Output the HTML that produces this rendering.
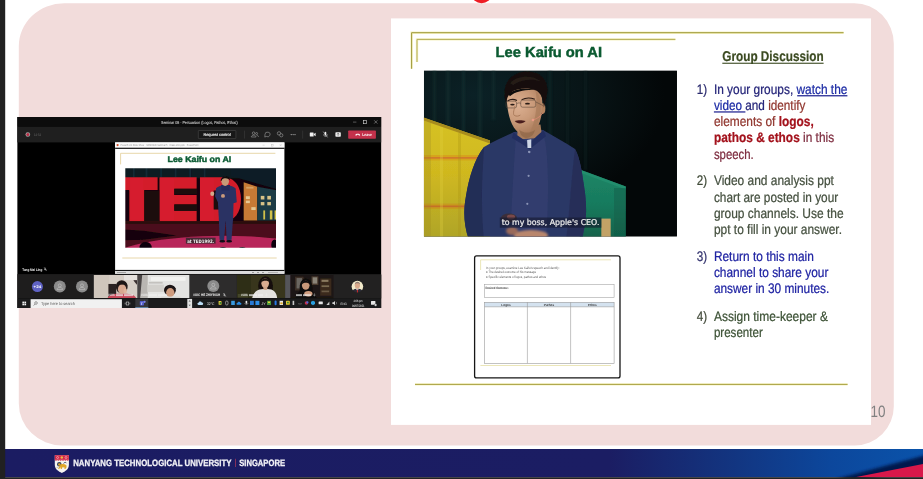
<!DOCTYPE html>
<html lang="en">
<head>
<meta charset="utf-8">
<title>Group Discussion - Lee Kaifu on AI</title>
<style>
html,body{margin:0;padding:0;background:#fff;overflow:hidden;}
body{width:923px;height:479px;position:relative;font-family:"Liberation Sans",sans-serif;}
svg{position:absolute;left:0;top:0;display:block;opacity:0.999;}
text{font-family:"Liberation Sans",sans-serif;text-rendering:geometricPrecision;}
</style>
</head>
<body>
<svg width="923" height="479" viewBox="0 0 923 479">
<defs>
  <linearGradient id="footg" x1="0" x2="1" y1="0" y2="0">
    <stop offset="0" stop-color="#1b1c62"/>
    <stop offset="0.66" stop-color="#1b1d63"/>
    <stop offset="0.72" stop-color="#172870"/>
    <stop offset="0.80" stop-color="#123682"/>
    <stop offset="0.90" stop-color="#0c479c"/>
    <stop offset="1" stop-color="#0a53aa"/>
  </linearGradient>
  <filter id="b03" x="-5%" y="-5%" width="110%" height="110%"><feGaussianBlur stdDeviation="0.3"/></filter>
  <filter id="b05" x="-5%" y="-5%" width="110%" height="110%"><feGaussianBlur stdDeviation="0.5"/></filter>
  <filter id="b1" x="-10%" y="-10%" width="120%" height="120%"><feGaussianBlur stdDeviation="1"/></filter>
  <filter id="b15" x="-10%" y="-30%" width="120%" height="160%"><feGaussianBlur stdDeviation="1.6"/></filter>
  <filter id="b2" x="-10%" y="-10%" width="120%" height="120%"><feGaussianBlur stdDeviation="2"/></filter>
  <filter id="b4" x="-20%" y="-20%" width="140%" height="140%"><feGaussianBlur stdDeviation="4"/></filter>
  <radialGradient id="curt" cx="0.2" cy="0.15" r="0.75">
    <stop offset="0" stop-color="#0b2126"/>
    <stop offset="0.6" stop-color="#081416"/>
    <stop offset="1" stop-color="#030708"/>
  </radialGradient>
  <filter id="b3" x="-10%" y="-10%" width="120%" height="120%"><feGaussianBlur stdDeviation="3"/></filter>
  <linearGradient id="yel" x1="0" y1="0" x2="0" y2="1">
    <stop offset="0" stop-color="#d6c224"/>
    <stop offset="0.45" stop-color="#d0b81f"/>
    <stop offset="1" stop-color="#aea428"/>
  </linearGradient>
  <radialGradient id="facegr" gradientUnits="userSpaceOnUse" cx="255" cy="190" r="170">
    <stop offset="0" stop-color="#dcb092"/>
    <stop offset="0.5" stop-color="#c99a79"/>
    <stop offset="1" stop-color="#a57656"/>
  </radialGradient>
  <linearGradient id="grn" x1="0" y1="0" x2="0" y2="1">
    <stop offset="0" stop-color="#1c8667"/>
    <stop offset="0.5" stop-color="#187a5d"/>
    <stop offset="1" stop-color="#126049"/>
  </linearGradient>

</defs>

<!-- page background -->
<rect x="0" y="0" width="923" height="479" fill="#ffffff"/>
<!-- pink rounded panel -->
<path d="M64.3,3.2 H854.3 A39.5,40.5 0 0 1 893.8,43.7 V406.4 A39,39 0 0 1 854.8,445.4 H62 A43.2,42 0 0 1 18.8,403.4 V46.4 A45.5,43.2 0 0 1 64.3,3.2 Z" fill="#f2dcdb"/>
<!-- red blob cut off at top -->
<ellipse cx="481.6" cy="-5" rx="9.6" ry="8.3" fill="#ee1c24"/>

<!-- FOOTER -->
<g id="footer">
  <rect x="0" y="449" width="923" height="28.2" fill="url(#footg)"/>
  <polygon points="836,479 930,454 930,468 856,481" fill="#06144a" opacity="0.95" filter="url(#b15)"/>
  <polygon points="855,477.2 923,464 923,477.2" fill="#d8184a"/>
</g>
<!-- left & bottom dark strips -->
<rect x="0" y="0" width="5.2" height="479" fill="#212121"/>
<rect x="0" y="477.2" width="923" height="1.8" fill="#232323"/>
<!-- ============ RIGHT: embedded slide ============ -->
<g id="slide">
  <rect x="391" y="18.4" width="480" height="406.5" fill="#ffffff"/>
  <g fill="none" stroke="#f6f2c0" stroke-width="2.4" stroke-linejoin="miter">
    <polyline points="411.6,68.8 411.6,32.7 843.6,32.7"/>
    <polyline points="417,62 417,39.4 675.4,39.4"/>
    <line x1="415" y1="384.4" x2="847.6" y2="384.4"/>
  </g>
  <g fill="none" stroke-linejoin="miter">
    <polyline points="411.6,68.8 411.6,32.7 843.6,32.7" stroke="#9d9839" stroke-width="1"/>
    <polyline points="417,62 417,39.4 675.4,39.4" stroke="#b3ad58" stroke-width="1"/>
    <line x1="415" y1="384.4" x2="847.6" y2="384.4" stroke="#a8a040" stroke-width="1"/>
  </g>
  <text x="495.6" y="56.9" font-size="14.4" font-weight="bold" fill="#0b5a31" stroke="#0b5a31" stroke-width="0.45" textLength="106.5" lengthAdjust="spacingAndGlyphs">Lee Kaifu on AI</text>
  <!-- video still: speaker on stage -->
  <g id="video">
    <clipPath id="vclip"><rect x="423.9" y="70.6" width="253" height="165.9"/></clipPath>
    <g clip-path="url(#vclip)">
      <rect x="423.9" y="70.6" width="253.4" height="166" fill="#030708"/>
      <!-- curtain tint -->
      <rect x="423.9" y="70.6" width="253.4" height="166" fill="url(#curt)"/>
      <g filter="url(#b1)" opacity="0.55">
        <rect x="433" y="70" width="3" height="60" fill="#16302f"/>
        <rect x="446" y="70" width="4" height="66" fill="#143030"/>
        <rect x="462" y="70" width="3" height="74" fill="#183535"/>
        <rect x="478" y="70" width="4" height="78" fill="#143030"/>
        <rect x="492" y="70" width="3" height="50" fill="#163232"/>
        <rect x="548" y="70" width="4" height="90" fill="#102828"/>
        <rect x="566" y="70" width="3" height="100" fill="#0e2424"/>
        <rect x="584" y="70" width="3" height="100" fill="#0c2020"/>
      </g>
      <!-- yellow block left -->
      <g filter="url(#b05)">
        <polygon points="422,117.1 490,140.6 490,240 422,240" fill="url(#yel)"/>
        <polygon points="422,117.1 490,140.6 490,143.6 422,120.1" fill="#a3861f" opacity="0.9"/>
        <rect x="422" y="155" width="64" height="5.4" fill="#d6a01e" opacity="0.85"/>
        <rect x="422" y="157" width="64" height="1.7" fill="#cf6e2c" opacity="0.8"/>
        <rect x="422" y="203.5" width="50" height="5.4" fill="#c8961e" opacity="0.85"/>
        <rect x="422" y="205.5" width="50" height="1.7" fill="#c4642a" opacity="0.8"/>
        <rect x="440" y="127" width="3" height="111" fill="#e0cf42" opacity="0.3"/>
        <rect x="458" y="133" width="3" height="105" fill="#a8921a" opacity="0.3"/>
        <polygon points="422,120 431,123 431,240 422,240" fill="#a08a20" opacity="0.3"/>
      </g>
      <!-- green block right -->
      <g filter="url(#b05)">
        <polygon points="579.7,169.6 625.8,186.6 625.8,240 579.7,240" fill="url(#grn)"/>
        <polygon points="579.7,169.6 625.8,186.6 625.8,189.4 579.7,172.6" fill="#23906f" opacity="0.8"/>
        <rect x="614" y="188" width="11.8" height="50" fill="#0f5a46" opacity="0.45"/>
        <rect x="601.3" y="218.6" width="9.4" height="19" fill="#c2a266"/>
      </g>
      <!-- speaker -->
      <g filter="url(#b05)">
        <!-- suit body -->
        <path d="M469,240 C464,226 463,212 466,196 C469,178 474,160 484,147 C494,141 504,137 514,132 L543,130 C553,136 565,142 575,149 C580,158 582,172 584,186 C586,198 587,212 585,224 L582,240 Z" fill="#2c3766"/>
        <path d="M516,136 L543,133 C549,150 549,200 546,240 L510,240 C512,200 514,160 516,136 Z" fill="#313d6e"/>
        <path d="M469,240 C464,226 463,212 466,196 C469,178 474,160 484,147 C483,170 480,200 484,240 Z" fill="#232d56"/>
        <path d="M575,149 C580,158 582,172 584,186 C586,198 587,212 585,224 L582,240 L566,240 C570,210 571,178 575,149 Z" fill="#252f58"/>
      </g>
      <g transform="translate(470,70) scale(0.18786)" filter="url(#b3)">
        <!-- neck -->
        <path d="M255,300 L375,290 L385,360 L250,370 Z" fill="#a87c5c"/>
        <!-- collar -->
        <path d="M232,330 C250,350 290,372 315,392 C340,365 370,340 392,318 L405,352 C380,372 345,395 318,425 C290,400 250,378 222,362 Z" fill="#232f60"/>
        <path d="M304,372 L326,368 L326,415 L306,415 Z" fill="#cdd5e4"/>
        <circle cx="316" cy="437" r="6" fill="#8f98bb"/>
        <!-- ear -->
        <ellipse cx="388" cy="205" rx="13" ry="28" fill="#b4835f"/>
        <!-- face -->
        <path d="M195,150 C195,100 230,75 290,72 C350,70 385,110 385,170 C387,230 375,290 345,325 C320,350 280,350 255,330 C225,305 200,250 195,150 Z" fill="url(#facegr)"/>
        <path d="M350,110 C385,140 388,230 345,325 C335,335 325,342 312,345 C345,290 362,200 350,110 Z" fill="#a97c5b" opacity="0.75"/>
        <path d="M200,160 C205,120 235,95 270,100 C235,120 215,170 215,240 C205,215 200,190 200,160 Z" fill="#d9ad8d" opacity="0.7"/>
        <!-- hair -->
        <path d="M187,160 C168,60 230,5 310,8 C392,10 428,72 406,150 C401,170 397,188 393,200 C393,160 380,124 350,108 C310,92 250,96 220,118 C202,132 196,152 191,178 Z" fill="#15100e"/>
        <path d="M215,70 C250,30 330,25 375,60 C340,45 270,48 230,80 Z" fill="#2a201c" opacity="0.8"/>
        <path d="M205,128 C235,100 300,92 352,108 C300,104 245,112 212,140 Z" fill="#0c0807"/>
        <path d="M262,318 C285,338 322,338 346,318 C340,345 325,360 300,362 C280,360 268,345 262,318 Z" fill="#8f6748" opacity="0.7"/>
        <!-- brows / eyes / glasses -->
        <path d="M200,165 C215,155 235,155 250,163" stroke="#2a1a14" stroke-width="6" fill="none"/>
        <path d="M275,158 C295,148 325,148 345,156" stroke="#2a1a14" stroke-width="6" fill="none"/>
        <ellipse cx="226" cy="184" rx="12" ry="5" fill="#2a1a14"/>
        <ellipse cx="306" cy="179" rx="13" ry="5" fill="#2a1a14"/>
        <g fill="none" stroke="#5a4638" stroke-width="3"><rect x="192" y="166" width="56" height="36" rx="10"/><rect x="270" y="160" width="80" height="38" rx="10"/><path d="M248,180 C256,174 264,174 270,178"/><path d="M350,170 L390,190"/></g>
        <!-- nose / mouth -->
        <path d="M240,190 C232,220 228,235 236,242 C246,248 260,246 268,240" stroke="#a87858" stroke-width="5" fill="none"/>
        <path d="M238,272 C252,266 280,266 296,272 C284,288 250,290 238,272 Z" fill="#4a1f1f"/>
        <!-- headset mic -->
        <path d="M388,228 C370,252 352,262 332,266" fill="none" stroke="#d98a72" stroke-width="5"/>
        <circle cx="335" cy="266" r="7" fill="#ea9a86"/>
      </g>
      <g filter="url(#b05)">
        <circle cx="529.1" cy="151.8" r="1.1" fill="#8a93b5"/><circle cx="528.6" cy="175.8" r="1.1" fill="#8a93b5"/>
        <circle cx="527.3" cy="203.8" r="1.1" fill="#8a93b5"/>
        <ellipse cx="509" cy="218" rx="8" ry="4.5" fill="#3a2f3a"/>
        <ellipse cx="511" cy="217" rx="4" ry="2.4" fill="#7a4a4a"/>
      </g>
      <!-- hands + subtitle -->
      <g filter="url(#b1)"><ellipse cx="531" cy="235.5" rx="17" ry="5.5" fill="#b9866c"/><ellipse cx="512" cy="231" rx="6" ry="4" fill="#9a6a5a"/></g>
      <rect x="499.8" y="217.5" width="101.6" height="10.2" fill="#14172c" opacity="0.6"/>
      <text x="501.7" y="225.3" font-size="8.1" fill="#ececec" stroke="#ececec" stroke-width="0.22" textLength="97.7" lengthAdjust="spacingAndGlyphs" style="font-family:'DejaVu Sans','Liberation Sans',sans-serif">to my boss, Apple's CEO.</text>
    </g>
  </g>
  <!-- worksheet thumbnail -->
  <g id="worksheet">
    <rect x="474.6" y="255.9" width="145.4" height="122" rx="2" ry="2" fill="#ffffff" stroke="#161616" stroke-width="1.3"/>
    <g stroke="#e6dfa6" stroke-width="0.8" fill="none">
      <polyline points="480.6,270 480.6,259.8 611,259.8"/>
      <line x1="480.4" y1="365.5" x2="611" y2="365.5"/>
    </g>
    <g font-size="3.3" fill="#5a5a5a">
      <text x="486" y="268.9" textLength="73.6" lengthAdjust="spacingAndGlyphs">In your groups, examine Lee Kaifu's speech and identify:</text>
      <text x="486" y="273.3" textLength="50" lengthAdjust="spacingAndGlyphs">● The desired outcome of his message</text>
      <text x="486" y="277.7" textLength="60" lengthAdjust="spacingAndGlyphs">● Specific elements of logos, pathos and ethos</text>
    </g>
    <rect x="484.5" y="284.4" width="129.6" height="13.2" fill="none" stroke="#a6a6a6" stroke-width="0.6"/>
    <text x="485.6" y="288.6" font-size="3.2" font-weight="bold" fill="#3a3a3a" textLength="23" lengthAdjust="spacingAndGlyphs">Desired Outcome:</text>
    <rect x="484.5" y="302.3" width="129.6" height="4.5" fill="#d4e2ef"/>
    <g fill="none" stroke="#9a9a9a" stroke-width="0.6">
      <rect x="484.5" y="302.3" width="129.6" height="61"/>
      <line x1="484.5" y1="306.8" x2="614.1" y2="306.8"/>
      <line x1="527.4" y1="302.3" x2="527.4" y2="363.3"/>
      <line x1="570.6" y1="302.3" x2="570.6" y2="363.3"/>
    </g>
    <g font-size="3.1" font-weight="bold" fill="#3a3a3a" text-anchor="middle">
      <text x="506" y="305.8">Logos</text>
      <text x="549" y="305.8">Pathos</text>
      <text x="592.4" y="305.8">Ethos</text>
    </g>
  </g>
<g id="list">
<text x="722.3" y="61" font-size="14.2" font-weight="bold" fill="#3b4a21" stroke="#3b4a21" stroke-width="0.2" textLength="101.3" lengthAdjust="spacingAndGlyphs">Group Discussion</text>
<rect x="722.3" y="62.7" width="101.3" height="1.1" fill="#3b4a21"/>
<text x="696.8" y="93.7" font-size="13.8" fill="#2b2b6e" stroke="#2b2b6e" stroke-width="0.24" textLength="10.4" lengthAdjust="spacingAndGlyphs">1)</text>
<text x="696.8" y="185.3" font-size="13.8" fill="#3f4a37" stroke="#3f4a37" stroke-width="0.24" textLength="10.4" lengthAdjust="spacingAndGlyphs">2)</text>
<text x="696.8" y="261.2" font-size="13.8" fill="#33336e" stroke="#33336e" stroke-width="0.24" textLength="10.4" lengthAdjust="spacingAndGlyphs">3)</text>
<text x="696.8" y="320.7" font-size="13.8" fill="#444c3c" stroke="#444c3c" stroke-width="0.24" textLength="10.4" lengthAdjust="spacingAndGlyphs">4)</text>
<text x="713.9" y="93.7" font-size="13.8" stroke-width="0.24" textLength="133.5" lengthAdjust="spacingAndGlyphs"><tspan fill="#26267a" stroke="#26267a">In your groups, </tspan><tspan fill="#1c2ba5" stroke="#1c2ba5">watch the</tspan></text>
<text x="713.9" y="109.9" font-size="13.8" stroke-width="0.24" textLength="91.5" lengthAdjust="spacingAndGlyphs"><tspan fill="#1c2ba5" stroke="#1c2ba5">video </tspan><tspan fill="#26267a" stroke="#26267a">and </tspan><tspan fill="#91372f" stroke="#91372f">identify</tspan></text>
<text x="713.9" y="126.1" font-size="13.8" stroke-width="0.24" textLength="99.9" lengthAdjust="spacingAndGlyphs"><tspan fill="#91372f" stroke="#91372f">elements of </tspan><tspan fill="#a3121c" stroke="#a3121c" font-weight="bold">logos,</tspan></text>
<text x="713.9" y="142.3" font-size="13.8" stroke-width="0.24" textLength="120.2" lengthAdjust="spacingAndGlyphs"><tspan fill="#a3121c" stroke="#a3121c" font-weight="bold">pathos &amp; ethos</tspan><tspan fill="#7d2b3e" stroke="#7d2b3e"> in this</tspan></text>
<text x="713.9" y="158.5" font-size="13.8" stroke-width="0.24" textLength="39.9" lengthAdjust="spacingAndGlyphs" fill="#7d2b3e" stroke="#7d2b3e">speech.</text>
<rect x="797.2" y="95.1" width="50.2" height="1.3" fill="#2a2d96"/>
<rect x="713.9" y="111.3" width="31.5" height="1.3" fill="#2a2d96"/>
<text x="713.9" y="185.3" font-size="13.8" stroke-width="0.24" textLength="120.0" lengthAdjust="spacingAndGlyphs" fill="#465140" stroke="#465140">Video and analysis ppt</text>
<text x="713.9" y="201.5" font-size="13.8" stroke-width="0.24" textLength="124.3" lengthAdjust="spacingAndGlyphs" fill="#465140" stroke="#465140">chart are posted in your</text>
<text x="713.9" y="217.7" font-size="13.8" stroke-width="0.24" textLength="129.7" lengthAdjust="spacingAndGlyphs" fill="#465140" stroke="#465140">group channels. Use the</text>
<text x="713.9" y="233.9" font-size="13.8" stroke-width="0.24" textLength="128.1" lengthAdjust="spacingAndGlyphs" fill="#465140" stroke="#465140">ppt to fill in your answer.</text>
<text x="713.9" y="261.2" font-size="13.8" stroke-width="0.24" textLength="99.9" lengthAdjust="spacingAndGlyphs" fill="#2024a3" stroke="#2024a3">Return to this main</text>
<text x="713.9" y="277.4" font-size="13.8" stroke-width="0.24" textLength="114.5" lengthAdjust="spacingAndGlyphs" fill="#2024a3" stroke="#2024a3">channel to share your</text>
<text x="713.9" y="293.4" font-size="13.8" stroke-width="0.24" textLength="115.4" lengthAdjust="spacingAndGlyphs" fill="#2024a3" stroke="#2024a3">answer in 30 minutes.</text>
<text x="713.9" y="320.7" font-size="13.8" stroke-width="0.24" textLength="114.0" lengthAdjust="spacingAndGlyphs" fill="#3d5236" stroke="#3d5236">Assign time-keeper &amp;</text>
<text x="713.9" y="336.9" font-size="13.8" stroke-width="0.24" textLength="48.9" lengthAdjust="spacingAndGlyphs" fill="#3d5236" stroke="#3d5236">presenter</text>
</g>
</g>
<text x="870.6" y="416.5" font-size="16.4" fill="#808080" textLength="15" lengthAdjust="spacingAndGlyphs">10</text>
<!-- ============ LEFT: Teams meeting screenshot ============ -->
<g id="teams">
  <clipPath id="tclip"><rect x="17.2" y="116.9" width="364.2" height="191"/></clipPath>
  <g clip-path="url(#tclip)">
    <rect x="17.2" y="116.9" width="364.2" height="191.3" fill="#000000"/>
    <!-- title bar -->
    <rect x="17.2" y="116.9" width="364.2" height="9.9" fill="#0c0c0c"/>
    <text x="161" y="123.5" font-size="4.3" fill="#d6d6d6" stroke="#d6d6d6" stroke-width="0.08" textLength="76.6" lengthAdjust="spacingAndGlyphs">Seminar 05 - Persuasion (Logos, Pathos, Ethos)</text>
    <g stroke="#d8d8d8" stroke-width="0.6" fill="none">
      <line x1="353" y1="122.1" x2="356.4" y2="122.1" stroke="#8a8a8a"/>
      <rect x="363.4" y="120.4" width="3.3" height="3.3"/>
      <path d="M374.2,120.3 L377.4,123.6 M377.4,120.3 L374.2,123.6" stroke="#9a9a9a"/>
    </g>
    <!-- toolbar -->
    <rect x="17.2" y="126.8" width="364.2" height="15.6" fill="#1f1f1f"/>
    <circle cx="27.8" cy="134.5" r="2.3" fill="#a8a8a8"/>
    <circle cx="27.8" cy="134.5" r="1.5" fill="#b82a44"/>
    <text x="34" y="135.7" font-size="3.6" fill="#6a6a6a" textLength="7" lengthAdjust="spacingAndGlyphs">14:54</text>
    <rect x="198.3" y="130.5" width="37.6" height="8.1" rx="0.6" fill="#181818" stroke="#4a4a4a" stroke-width="0.6"/>
    <text x="203.4" y="135.9" font-size="4" fill="#f0f0f0" stroke="#f0f0f0" stroke-width="0.14" textLength="27.2" lengthAdjust="spacingAndGlyphs">Request control</text>
    <rect x="244" y="130.6" width="0.6" height="8" fill="#3c3c3c"/>
    <rect x="302.5" y="130.6" width="0.6" height="8" fill="#3c3c3c"/>
    <!-- toolbar icons -->
    <g fill="none" stroke="#a0a0a0" stroke-width="0.6">
      <circle cx="253.6" cy="133.2" r="1.3"/><path d="M251.3,137 C251.3,134.6 256,134.6 256,137 Z"/><circle cx="256.6" cy="133.5" r="1"/><path d="M256.6,135.2 C258,135.2 258.4,136 258.4,137"/>
      <path d="M265,134.4 a2.5,2.3 0 1 1 1.2,2 l-1.4,0.7 z"/>
      <circle cx="279" cy="133.4" r="1.7"/><circle cx="281.3" cy="135.3" r="1.6" fill="#1f1f1f"/>
    </g>
    <g fill="#c0c0c0"><circle cx="291.2" cy="134.6" r="0.55"/><circle cx="293.1" cy="134.6" r="0.55"/><circle cx="295" cy="134.6" r="0.55"/></g>
    <g fill="#f0f0f0">
      <rect x="309.8" y="132.4" width="3.8" height="4.2" rx="0.5"/><path d="M313.9,134 L315.6,132.8 L315.6,136.2 L313.9,135 Z"/>
      <rect x="324.6" y="131.8" width="1.7" height="3.6" rx="0.85"/><path d="M323.6,134.4 C323.6,137 327.3,137 327.3,134.4" fill="none" stroke="#f0f0f0" stroke-width="0.5"/><line x1="323.2" y1="131.6" x2="327.6" y2="137.4" stroke="#f0f0f0" stroke-width="0.5"/>
      <rect x="335.4" y="132.3" width="5.4" height="4.4" rx="0.7"/>
    </g>
    <path d="M338.1,135.8 L338.1,133.4 M337.1,134.3 L338.1,133.3 L339.1,134.3" fill="none" stroke="#1f1f1f" stroke-width="0.5"/>
    <rect x="348.2" y="130.5" width="27.7" height="8.2" rx="0.7" fill="#c4314b"/>
    <path d="M355.2,135.2 c0.6,-1.9 4.4,-1.9 5,0 l-1.2,0.5 l-0.5,-0.9 h-1.6 l-0.5,0.9 z" fill="#ffffff"/>
    <text x="362.3" y="136" font-size="4" font-weight="bold" fill="#ffffff" textLength="9.6" lengthAdjust="spacingAndGlyphs">Leave</text>

    <!-- shared PowerPoint window -->
    <rect x="115.1" y="142.4" width="169.3" height="131.4" fill="#ffffff"/>
    <rect x="115.1" y="142.4" width="169.3" height="5.3" fill="#fbfbfb"/>
    <circle cx="117.6" cy="145.1" r="1.1" fill="#d04a24"/>
    <text x="120.4" y="146.2" font-size="2.9" fill="#9a9a9a" textLength="78" lengthAdjust="spacingAndGlyphs">PowerPoint Slide Show - SEMINAR Seminar 5 - Class 202.pptx - PowerPoint</text>
    <g stroke="#b8b8b8" stroke-width="0.4" fill="none"><line x1="262.6" y1="145.2" x2="264.6" y2="145.2"/><rect x="271.2" y="144.2" width="1.9" height="1.9"/><path d="M279.6,144.2 l2,2 m0,-2 l-2,2"/></g>
    <rect x="115.1" y="147.7" width="169.3" height="1.2" fill="#101010"/>
    <rect x="115.1" y="269.9" width="169.3" height="1.2" fill="#151515"/>
    <rect x="115.1" y="271.1" width="169.3" height="2.6" fill="#dcdcdc"/>
    <g fill="#8a8a8a"><rect x="117" y="272" width="9" height="0.7"/><rect x="252" y="272" width="2" height="0.8"/><rect x="257" y="272" width="2" height="0.8"/><rect x="262" y="272" width="2" height="0.8"/><rect x="268" y="272.2" width="10" height="0.5"/></g>
    <!-- mini slide -->
    <g fill="none" stroke="#e5d3a0" stroke-width="0.9">
      <polyline points="120.6,164.4 120.6,153.3 275.4,153.3"/>
      <line x1="122.3" y1="258" x2="276.7" y2="258"/>
    </g>
    <text x="167.6" y="162.1" font-size="8.2" font-weight="bold" fill="#0c5c34" stroke="#0c5c34" stroke-width="0.45" textLength="63.6" lengthAdjust="spacingAndGlyphs">Lee Kaifu on AI</text>
        <!-- TED stage still (coords in 5.506x zoom space) -->
    <clipPath id="tedclip"><rect x="125.3" y="168.3" width="150.7" height="79.4"/></clipPath>
    <g clip-path="url(#tedclip)">
    <g transform="translate(122,165) scale(0.18162)" filter="url(#b4)">
      <rect x="10" y="10" width="850" height="455" fill="#12060a"/>
      <!-- curtain -->
      <rect x="10" y="10" width="850" height="62" fill="#091a22"/>
      <g fill="#16323e" opacity="0.7"><rect x="60" y="10" width="10" height="60"/><rect x="130" y="10" width="10" height="60"/><rect x="210" y="10" width="10" height="60"/><rect x="290" y="10" width="10" height="60"/><rect x="370" y="10" width="10" height="60"/><rect x="450" y="10" width="10" height="60"/><rect x="640" y="10" width="10" height="60"/><rect x="720" y="10" width="10" height="80"/><rect x="790" y="10" width="10" height="100"/></g>
      <polygon points="600,60 860,135 860,10 600,10" fill="#0a1d26"/>
      <!-- letters -->
      <g fill="#d31c2b">
        <path d="M10,68 H196 V138 H123 V312 H39 V138 H10 Z"/>
        <path d="M207,68 H411 V131 H288 V165 H411 V217 H288 V252 H411 V312 H207 Z"/>
        <path d="M429,68 H560 C620,68 655,120 655,190 C655,260 620,310 560,310 H429 Z"/>
      </g>
      <g fill="#e02a36" opacity="0.25">
        <rect x="45" y="72" width="72" height="230"/><rect x="205" y="72" width="80" height="232"/><rect x="430" y="72" width="75" height="232"/>
      </g>
      <path d="M505,140 H545 C565,140 575,165 575,190 C575,220 565,245 545,245 H505 Z" fill="#1a070b"/>
      <rect x="123" y="138" width="82" height="174" fill="#1d070b"/>
      <rect x="10" y="140" width="30" height="170" fill="#16060a"/>
      <rect x="288" y="131" width="128" height="34" fill="#1c070b"/>
      <rect x="288" y="217" width="128" height="35" fill="#1c070b"/>
      <!-- floor -->
      <rect x="10" y="310" width="850" height="160" fill="#4b0d1b"/>
      <rect x="10" y="310" width="850" height="14" fill="#2a070e"/>
      <ellipse cx="560" cy="520" rx="620" ry="130" fill="#b8275a"/>
      <polygon points="10,355 120,362 300,388 120,412 10,414" fill="#12060a"/>
      <!-- buildings -->
      <polygon points="670,95 745,120 745,305 670,305" fill="#c87a34"/>
      <polygon points="745,120 860,140 860,305 745,305" fill="#1b3a45"/>
      <g fill="#e6c893"><rect x="682" y="172" width="22" height="16"/><rect x="682" y="196" width="22" height="14"/><rect x="712" y="232" width="24" height="16"/><rect x="684" y="120" width="40" height="10" opacity="0.5"/></g>
      <g fill="#d9c387"><rect x="764" y="170" width="20" height="20"/><rect x="800" y="170" width="20" height="20"/><rect x="764" y="204" width="20" height="18"/><rect x="800" y="204" width="20" height="18"/></g>
      <g fill="#cfc04a"><rect x="778" y="250" width="10" height="50"/><rect x="814" y="250" width="14" height="50"/><rect x="840" y="250" width="12" height="50"/></g>
      <!-- speaker -->
      <path d="M518,128 C538,106 604,106 626,130 L632,205 L614,210 L612,292 L603,412 L576,414 L571,305 L562,414 L537,412 L533,292 L528,205 L512,172 Z" fill="#2b3163"/>
      <path d="M545,110 h50 l-4,30 h-42 z" fill="#262c5a"/>
      <ellipse cx="568" cy="90" rx="21" ry="25" fill="#c79a78"/>
      <path d="M544,88 C542,54 596,52 596,86 C592,72 562,68 553,78 C549,82 547,90 544,88 Z" fill="#0e0a0a"/>
      <ellipse cx="497" cy="158" rx="11" ry="12" fill="#d5a88a"/>
      <ellipse cx="556" cy="170" rx="11" ry="11" fill="#c99a7c"/>
      <ellipse cx="552" cy="420" rx="16" ry="7" fill="#0a0a12"/><ellipse cx="590" cy="420" rx="16" ry="7" fill="#0a0a12"/>
      <!-- audience silhouettes -->
      <ellipse cx="130" cy="452" rx="34" ry="28" fill="#08040a"/>
      <ellipse cx="556" cy="466" rx="22" ry="14" fill="#0a050c"/>
      <ellipse cx="662" cy="466" rx="22" ry="14" fill="#0a050c"/>
      <ellipse cx="840" cy="440" rx="18" ry="30" fill="#0a050c"/>
    </g>
    <rect x="185.9" y="237.7" width="29.7" height="5.9" fill="#3a2a30" opacity="0.9"/>
    <text x="187.2" y="242.5" font-size="4.6" font-weight="bold" fill="#f4f4f4" textLength="27" lengthAdjust="spacingAndGlyphs" style="font-family:'DejaVu Sans','Liberation Sans',sans-serif">at TED1992.</text>
    </g>

    <!-- presenter label -->
    <text x="22.3" y="270.5" font-size="3.7" font-weight="bold" fill="#f2f2f2" textLength="20" lengthAdjust="spacingAndGlyphs">Tang Mei Ling</text>
    <path d="M45.2,267.6 v1.8 M44.3,269 c0,1.3 1.8,1.3 1.8,0 M44.2,267.4 l2.4,3.4" stroke="#f2f2f2" stroke-width="0.45" fill="none"/>

    <!-- participant strip -->
    <rect x="17.2" y="274.1" width="364.2" height="24.4" fill="#1e1d1d"/>
    <rect x="189.5" y="274.9" width="47.3" height="23" fill="#2d2c2c"/>
    <rect x="333.5" y="274.9" width="48" height="23.5" fill="#222121"/>
    <circle cx="37.4" cy="286.6" r="5.5" fill="#5f62c4"/>
    <text x="33.6" y="288" font-size="3.8" font-weight="bold" fill="#ffffff" textLength="7.6" lengthAdjust="spacingAndGlyphs">+24</text>
    <g id="av1"><circle cx="59.8" cy="286.6" r="6" fill="#8b8b8b"/><circle cx="59.8" cy="285.4" r="1.5" fill="none" stroke="#c4c4c4" stroke-width="0.6"/><path d="M57,289.6 c0,-3 5.6,-3 5.6,0 z" fill="none" stroke="#c4c4c4" stroke-width="0.6"/></g>
    <g><circle cx="82" cy="286.6" r="6" fill="#8b8b8b"/><circle cx="82" cy="285.4" r="1.5" fill="none" stroke="#c4c4c4" stroke-width="0.6"/><path d="M79.2,289.6 c0,-3 5.6,-3 5.6,0 z" fill="none" stroke="#c4c4c4" stroke-width="0.6"/></g>
    <g><circle cx="213.3" cy="286" r="6" fill="#8b8b8b"/><circle cx="213.3" cy="284.8" r="1.5" fill="none" stroke="#c4c4c4" stroke-width="0.6"/><path d="M210.5,289 c0,-3 5.6,-3 5.6,0 z" fill="none" stroke="#c4c4c4" stroke-width="0.6"/></g>
    <text x="193.3" y="296.4" font-size="3.5" font-weight="bold" fill="#f0f0f0" textLength="27" lengthAdjust="spacingAndGlyphs">#UIC HE ZHIYINGH</text>
    <path d="M224.4,293.4 v1.8 M223.5,294.8 c0,1.3 1.8,1.3 1.8,0 M223.4,293.2 l2.4,3.4" stroke="#f2f2f2" stroke-width="0.45" fill="none"/>
        <!-- participant video tiles (coords in 5.769x zoom space, origin 85,268) -->
    <clipPath id="tileclip"><rect x="93.7" y="274.9" width="95.8" height="23"/></clipPath>
    <g clip-path="url(#tileclip)">
    <g transform="translate(85,268) scale(0.17334)" filter="url(#b3)">
      <!-- tile 1 -->
      <rect x="50" y="40" width="252" height="133" fill="#d6cec6"/>
      <rect x="50" y="40" width="90" height="133" fill="#cfc6bc"/>
      <rect x="135" y="92" width="45" height="81" fill="#2c2222"/>
      <polygon points="262,40 302,40 302,100 285,80" fill="#3a3030"/>
      <rect x="225" y="40" width="77" height="30" fill="#e6e2de"/>
      <ellipse cx="212" cy="108" rx="34" ry="38" fill="#241a1a"/>
      <ellipse cx="214" cy="122" rx="24" ry="28" fill="#d8a890"/>
      <path d="M180,104 C185,70 240,70 246,104 C236,92 196,92 180,104 Z" fill="#1c1414"/>
      <path d="M130,173 C140,150 180,146 212,150 C245,146 285,152 295,173 Z" fill="#c8485a"/>
      <ellipse cx="232" cy="132" rx="10" ry="14" fill="#e0b49c"/>
      <!-- tile 2 -->
      <rect x="302" y="40" width="302" height="133" fill="#e4e4e2"/>
      <rect x="302" y="40" width="60" height="133" fill="#b9b6b2"/>
      <polygon points="302,40 330,40 318,173 302,173" fill="#4a4444"/>
      <rect x="360" y="96" width="95" height="42" fill="#d2d0cc"/>
      <rect x="380" y="52" width="200" height="22" fill="#f2f2f0"/>
      <rect x="368" y="80" width="80" height="10" fill="#c4c2be"/>
      <ellipse cx="490" cy="128" rx="34" ry="32" fill="#1e1616"/>
      <ellipse cx="492" cy="142" rx="24" ry="26" fill="#cf9c7e"/>
      <path d="M458,126 C462,94 520,94 526,126 C512,112 474,112 458,126 Z" fill="#1a1212"/>
      <rect x="440" y="165" width="110" height="10" fill="#d8d6d2"/>
    </g>
    </g>
    <!-- tiles 3 & 4 (coords in 5.769x zoom space, origin 230,268) -->
    <clipPath id="tileclip2"><rect x="236.9" y="274.9" width="96.6" height="23"/></clipPath>
    <g clip-path="url(#tileclip2)">
    <g transform="translate(230,268) scale(0.17334)" filter="url(#b3)">
      <!-- tile 3 -->
      <rect x="40" y="40" width="278" height="133" fill="#37361d"/>
      <rect x="40" y="40" width="80" height="133" fill="#2e2e18"/>
      <ellipse cx="205" cy="100" rx="42" ry="52" fill="#17100c"/>
      <rect x="165" y="100" width="82" height="60" fill="#17100c"/>
      <ellipse cx="203" cy="88" rx="22" ry="28" fill="#d9ac90"/>
      <path d="M178,84 C182,52 226,52 230,84 C220,70 190,70 178,84 Z" fill="#1a120e"/>
      <path d="M128,173 C135,135 165,118 205,122 C245,118 268,135 272,173 Z" fill="#e4e2de"/>
      <rect x="193" y="108" width="22" height="18" fill="#d0a488"/>
      <rect x="45" y="150" width="60" height="20" fill="#55583a" opacity="0.6"/>
      <!-- tile 4 -->
      <rect x="318" y="40" width="280" height="133" fill="#1b1412"/>
      <rect x="318" y="40" width="30" height="133" fill="#55545a"/>
      <rect x="375" y="50" width="50" height="80" fill="#3a2e26"/><rect x="384" y="58" width="32" height="60" fill="#6a6660"/>
      <rect x="470" y="48" width="40" height="50" fill="#4a3c30"/><rect x="477" y="54" width="26" height="36" fill="#8a8478"/>
      <rect x="520" y="60" width="65" height="100" fill="#3a2a1e"/>
      <rect x="528" y="68" width="40" height="12" fill="#8a7a60"/><rect x="528" y="100" width="44" height="10" fill="#7a6a50"/><rect x="528" y="130" width="44" height="10" fill="#6a5a44"/>
      <ellipse cx="438" cy="104" rx="36" ry="42" fill="#0c0808"/>
      <rect x="402" y="110" width="74" height="50" fill="#0c0808"/>
      <ellipse cx="437" cy="100" rx="22" ry="26" fill="#c9987a"/>
      <path d="M412,96 C416,66 458,66 462,96 C452,82 424,82 412,96 Z" fill="#0e0a0a"/>
      <path d="M380,173 C385,140 410,128 438,132 C468,128 492,140 498,173 Z" fill="#0a0808"/>
      <ellipse cx="452" cy="148" rx="24" ry="16" fill="#cf9e80"/>
    </g>
    </g>
    <!-- name strips on tiles (illegible in source; only the #UIC prefix is readable) -->
    <g font-size="3.2" font-weight="bold" fill="#f2f2f2" opacity="0.9">
      <text x="108" y="296.3" textLength="7" lengthAdjust="spacingAndGlyphs">#UIC</text>
      <text x="141" y="296.3" textLength="7" lengthAdjust="spacingAndGlyphs">#UIC</text>
      <text x="241" y="296.3" textLength="7" lengthAdjust="spacingAndGlyphs">#UIC</text>
    </g>
    <g fill="#f0f0f0" opacity="0.7">
      <rect x="116" y="294.2" width="7" height="1.9"/><rect x="124" y="294.2" width="9" height="1.9"/>
      <rect x="149" y="294.2" width="8" height="1.9"/><rect x="158" y="294.2" width="9" height="1.9"/>
      <rect x="249" y="294.2" width="8" height="1.9"/><rect x="258" y="294.2" width="5" height="1.9"/>
      <rect x="296" y="294.2" width="6" height="1.9"/><rect x="303" y="294.2" width="8" height="1.9"/>
    </g>
    <path d="M266.4,293.4 v1.8 M265.5,294.8 c0,1.3 1.8,1.3 1.8,0" stroke="#f2f2f2" stroke-width="0.45" fill="none"/>
    <path d="M314.4,293.4 v1.8 M313.5,294.8 c0,1.3 1.8,1.3 1.8,0" stroke="#f2f2f2" stroke-width="0.45" fill="none"/>
    <!-- last avatar photo -->
    <clipPath id="avclip"><circle cx="357.4" cy="286.6" r="5.8"/></clipPath>
    <g clip-path="url(#avclip)" filter="url(#b03)">
      <rect x="350" y="279" width="15" height="15" fill="#f1e9c9"/>
      <path d="M351.5,294 C352,289.5 355,288.6 357.4,288.8 C360,288.6 363,289.5 363.4,294 Z" fill="#2a2a34"/>
      <path d="M356,288.8 L358.8,288.8 L357.4,291 Z" fill="#f4f4f4"/>
      <path d="M357,289.6 L357.9,289.6 L358.1,293 L356.8,293 Z" fill="#c22a2a"/>
      <ellipse cx="357.4" cy="285.3" rx="2.6" ry="3.3" fill="#d9a98a"/>
      <path d="M354.8,284.4 C355,281 359.8,281 360,284.4 C359,282.8 355.8,282.8 354.8,284.4 Z" fill="#8a7a70"/>
    </g>

        <!-- Windows taskbar -->
    <rect x="17.2" y="298.4" width="364.2" height="9.8" fill="#1b1b1c"/>
    <g fill="#f4f4f4"><rect x="22.4" y="301.6" width="1.7" height="1.7"/><rect x="24.4" y="301.6" width="1.7" height="1.7"/><rect x="22.4" y="303.6" width="1.7" height="1.7"/><rect x="24.4" y="303.6" width="1.7" height="1.7"/></g>
    <rect x="30.6" y="299.2" width="91.3" height="9" fill="#f1f1f1"/>
    <circle cx="36" cy="303" r="1.3" fill="none" stroke="#444" stroke-width="0.5"/><line x1="35" y1="304" x2="33.6" y2="305.6" stroke="#444" stroke-width="0.5"/>
    <text x="40.9" y="305.2" font-size="4.2" fill="#5a5a5a" textLength="34" lengthAdjust="spacingAndGlyphs">Type here to search</text>
    <g fill="none" stroke="#e8e8e8" stroke-width="0.5"><rect x="126.2" y="302" width="2.6" height="3"/><path d="M125.2,302.6 v1.8 M129.8,302.6 v1.8"/></g>
    <rect x="135.3" y="298.6" width="13" height="9.6" fill="#36363a"/>
    <rect x="135.3" y="307.4" width="13" height="0.9" fill="#7fb8ea"/>
    <rect x="139.8" y="301" width="4.2" height="4.6" rx="0.8" fill="#5059c9"/><circle cx="144.6" cy="301.8" r="1.1" fill="#7b83eb"/>
    <text x="140.8" y="304.8" font-size="3.4" font-weight="bold" fill="#ffffff">T</text>
    <!-- scroll strip between taskbar halves -->
    <rect x="187.3" y="298.9" width="4.8" height="9.3" fill="#e2e2e2"/>
    <path d="M188.6,301.6 l1.1,-1.3 l1.1,1.3 z M188.6,304.8 l1.1,1.3 l1.1,-1.3 z" fill="#505050"/>
    <!-- tray icons -->
    <path d="M198.6,305 c-1.6,0 -1.6,-2.2 0,-2.2 c0.2,-1.7 2.8,-1.7 3.1,-0.3 c1.8,-0.2 2,2.5 0.2,2.5 z" fill="#bcdcf4"/>
    <text x="207" y="305.2" font-size="3.7" fill="#e8e8e8" textLength="7.4" lengthAdjust="spacingAndGlyphs">32°C</text>
    <g>
      <rect x="218.6" y="301" width="2.9" height="3.8" rx="0.6" fill="#e4c83a"/><rect x="219.6" y="302" width="1.6" height="2" fill="#3a8a3a"/>
      <rect x="225.6" y="301" width="2.4" height="4" rx="1.1" fill="none" stroke="#e8e8e8" stroke-width="0.5"/>
      <rect x="231.2" y="300.8" width="3.6" height="4.2" fill="#3a9ae0"/>
      <path d="M237.4,304.8 c-1.3,0 -1.3,-1.9 0,-1.9 c0.3,-1.5 2.6,-1.5 2.8,-0.2 c1.5,-0.2 1.7,2.1 0.2,2.1 z" fill="#2a8ae0"/>
      <rect x="245.6" y="300.8" width="1.6" height="3" rx="0.8" fill="#e8e8e8"/><path d="M244.9,303 c0,2 3,2 3,0" fill="none" stroke="#e8e8e8" stroke-width="0.4"/>
      <rect x="250" y="300.8" width="3.8" height="4.2" fill="#2a7ad6"/><rect x="255.4" y="300.8" width="4" height="4.2" fill="#2f8ee6"/>
      <text x="261.4" y="305" font-size="3.6" fill="#e0e0e0">JY</text>
      <rect x="267" y="300.8" width="4" height="4.2" fill="#4a9a3a"/><rect x="268" y="301.6" width="2" height="1.4" fill="#e6d23a"/>
      <rect x="274.6" y="300.6" width="2" height="4.6" rx="0.9" fill="#2a7ae6"/>
      <rect x="279.6" y="300.8" width="3.4" height="4.2" fill="#e8e8e8"/><rect x="280.4" y="302.4" width="2.2" height="1.8" fill="#e0a820"/>
      <rect x="286" y="300.8" width="3.8" height="4" rx="0.6" fill="#e2c62e"/><rect x="287" y="301.8" width="1.8" height="1.6" fill="#3a8a3a"/>
      <rect x="292.6" y="300.8" width="1.6" height="4.2" fill="#c8c8c8"/>
      <text x="298" y="305" font-size="3.4" fill="#b0b0b0">&lt;&gt;</text>
      <circle cx="306.4" cy="303" r="1.7" fill="#c8304a"/><circle cx="307.4" cy="302.4" r="1.1" fill="#4a6ae0"/>
      <path d="M313,300.8 l2,1 v2.2 l-2,1.2 l-2,-1.2 v-2.2 z" fill="#2aa0e0"/>
      <rect x="318.6" y="301.6" width="4.2" height="2.6" rx="0.5" fill="#e8e8e8"/>
      <path d="M326.4,305 l3,0 l0,-3.6 z" fill="#d0d0d0"/>
      <path d="M332.4,302.2 h1.2 l1.4,-1.2 v4.2 l-1.4,-1.2 h-1.2 z" fill="#d8d8d8"/><path d="M336,301.8 c0.8,0.7 0.8,1.9 0,2.6" fill="none" stroke="#d8d8d8" stroke-width="0.4"/>
      <text x="340.6" y="305" font-size="3.4" fill="#e0e0e0" textLength="6.2" lengthAdjust="spacingAndGlyphs">ENG</text>
      <text x="353.4" y="302.4" font-size="3.3" fill="#f0f0f0" textLength="9.2" lengthAdjust="spacingAndGlyphs">4:06 pm</text>
      <text x="352" y="306.6" font-size="3.3" fill="#f0f0f0" textLength="12.4" lengthAdjust="spacingAndGlyphs">06/07/2021</text>
      <rect x="371" y="301" width="4.4" height="3.8" rx="0.5" fill="#e8e8e8"/><circle cx="375.6" cy="305" r="1.3" fill="#d8d8d8" stroke="#1c1c1e" stroke-width="0.3"/>
    </g>

  </g>
</g>
<!-- footer logo + text -->
<g id="ntu">
  <g filter="url(#b03)">
  <path d="M54.8,455.2 H68.9 V464.6 C68.9,469.4 65.2,471.6 61.85,472.9 C58.5,471.6 54.8,469.4 54.8,464.6 Z" fill="#f6f4f0"/>
  <path d="M54.8,455.2 H68.9 V459.7 H54.8 Z" fill="#d22645"/>
  <path d="M54.8,459.6 h14.1 v0.5 q-1.18,1.5 -2.35,0 q-1.18,1.5 -2.35,0 q-1.18,1.5 -2.35,0 q-1.18,1.5 -2.35,0 q-1.18,1.5 -2.35,0 q-1.18,1.5 -2.35,0 Z" fill="#d22645"/>
  <g fill="none" stroke="#f2b6c0" stroke-width="0.7"><circle cx="57.6" cy="457.5" r="1"/><circle cx="66.0" cy="457.5" r="1"/></g>
  <circle cx="61.8" cy="457.5" r="1.25" fill="#e9b94a"/>
  <!-- lion -->
  <circle cx="59.3" cy="464.2" r="2.3" fill="#2f3f5e"/>
  <circle cx="59.3" cy="464.4" r="1.25" fill="#d9a52e"/>
  <path d="M60.6,464.6 C62.4,463.8 64.6,464 66.4,465.2 L66.6,467.2 L65.4,468.9 L64.4,468.9 L64.6,467.4 L62.4,467.3 L61.8,469 L60.6,469 L60.8,467.2 L59,468.9 L58,468.6 L59.4,466.6 Z" fill="#e0a72a"/>
  <path d="M63.6,463.6 C64.2,462 66,461.9 66.4,463.2" fill="none" stroke="#2f3f5e" stroke-width="0.8"/>
  <path d="M57.6,466.8 l-0.8,1.4 M60.2,462.6 l0.8,-0.8" stroke="#8a7a3a" stroke-width="0.5"/>
  </g>
  <text x="73.2" y="466.2" font-size="9.2" font-weight="bold" fill="#f1f1f6" stroke="#f1f1f6" stroke-width="0.3" textLength="158.3" lengthAdjust="spacingAndGlyphs">NANYANG TECHNOLOGICAL UNIVERSITY</text>
  <rect x="235" y="458.8" width="0.7" height="8.2" fill="#b03a5a"/>
  <text x="239.2" y="466.2" font-size="9.2" font-weight="bold" fill="#f1f1f6" stroke="#f1f1f6" stroke-width="0.3" textLength="45.8" lengthAdjust="spacingAndGlyphs">SINGAPORE</text>
</g>
</svg>
</body>
</html>
